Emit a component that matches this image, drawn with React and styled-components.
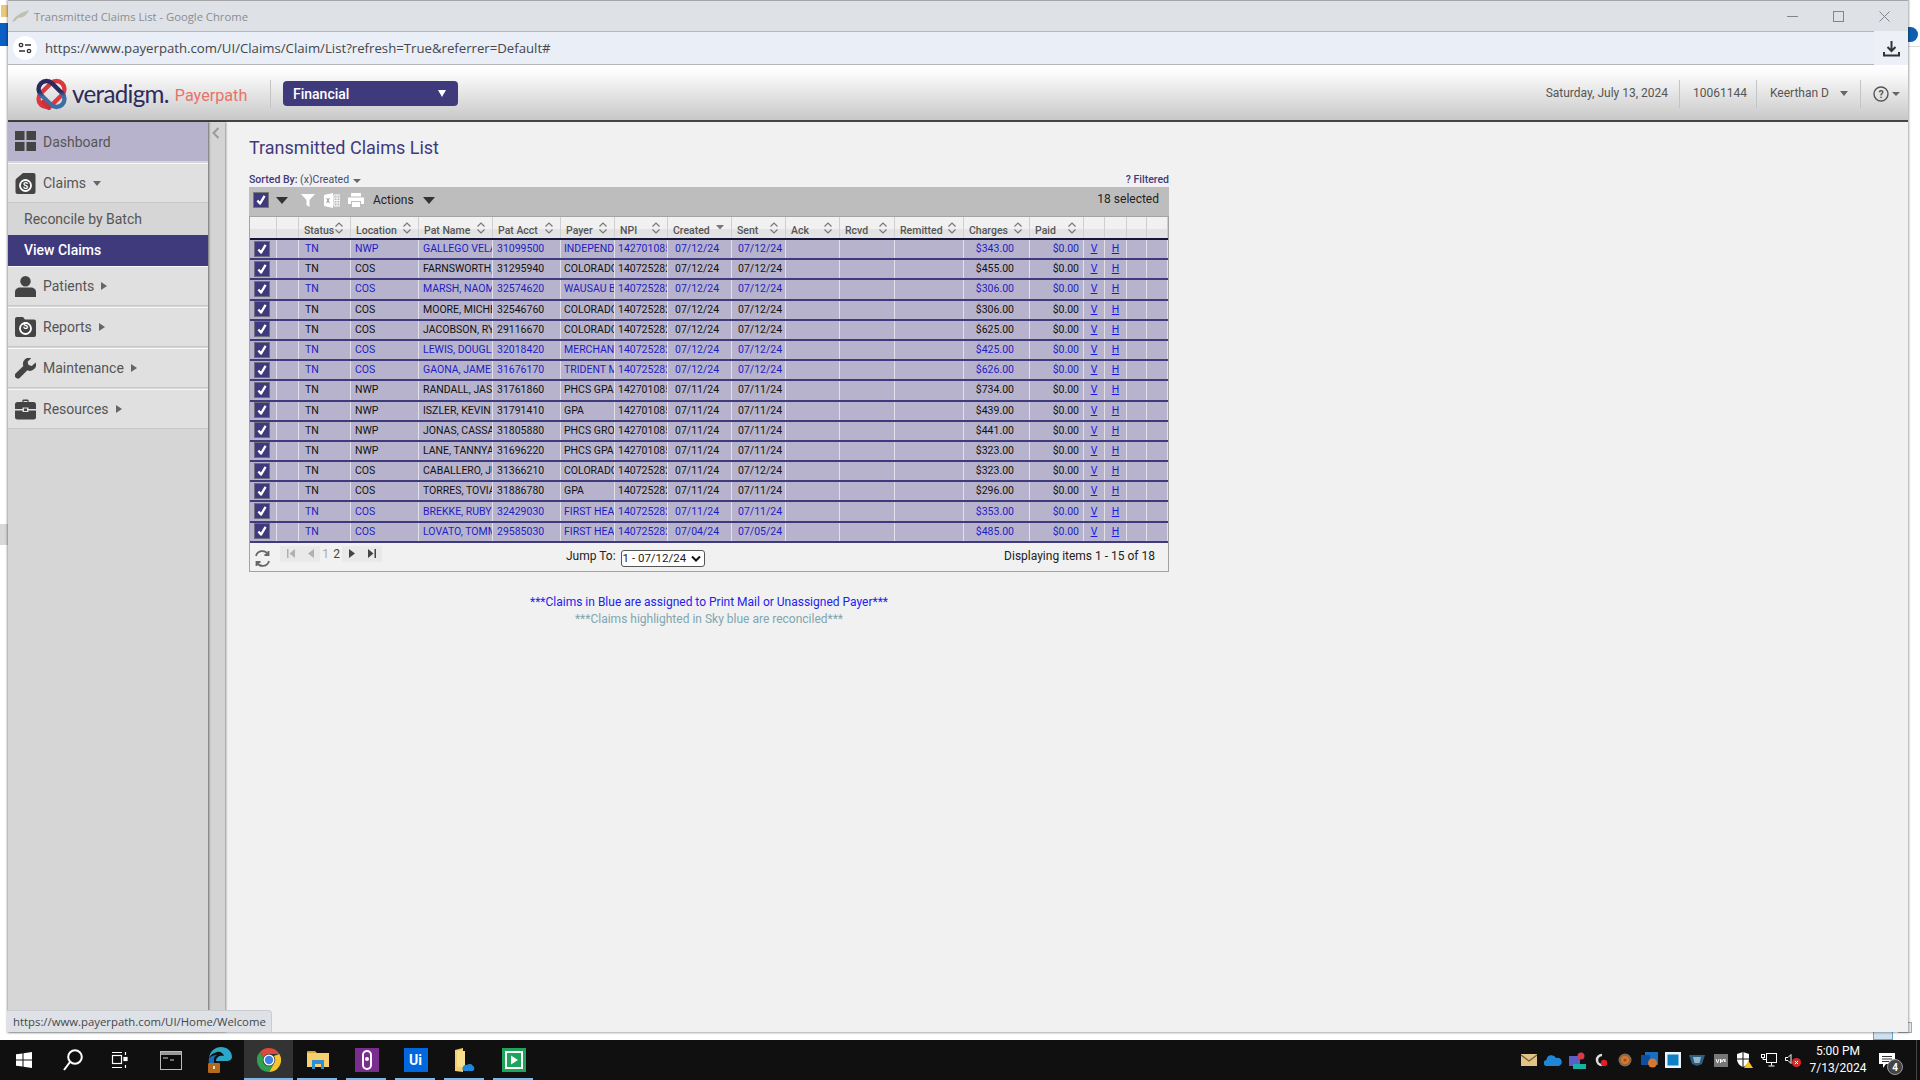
import React from 'react';
import styled, { createGlobalStyle } from 'styled-components';

const Global = createGlobalStyle`
  html, body { margin: 0; padding: 0; background: #fff; overflow: hidden; }
  * { box-sizing: border-box; }
  body { font-family: Roboto, "Liberation Sans", sans-serif; }
`;

const Desktop = styled.div`
  position: relative; width: 1920px; height: 1080px; display: flex; flex-direction: column; background: #fff; overflow: hidden;
`;
const DeskBit = styled.div`
  position: absolute; left: ${p => p.$x}px; top: ${p => p.$y}px; width: ${p => p.$w}px; height: ${p => p.$h}px;
  background: ${p => p.$bg}; border-radius: ${p => p.$r || 0}; border: ${p => p.$b || 'none'};
`;
const WindowArea = styled.div`
  position: relative; flex: 1; min-height: 0; padding: 0 12px 8px 8px; display: flex;
`;
const Win = styled.div`
  flex: 1; min-width: 0; display: flex; flex-direction: column; border-top: 1px solid #a4a6a9;
  box-shadow: 0 0 2px 1px rgba(0,0,0,.35); background: #f1f1f1; position: relative;
`;
const TitleBar = styled.div`
  height: 30px; flex: none; background: #dee1e6; display: flex; align-items: center; padding: 0 0 0 4px; gap: 4px;
  color: #8a8d91; font: 11.25px "Open Sans", sans-serif;
`;
const WinControls = styled.div`
  margin-left: auto; margin-right: 1px; display: flex; align-items: center; color: #80868b;
`;
const WinBtn = styled.div`
  width: 46px; height: 30px; display: flex; align-items: center; justify-content: center;
`;
const AddressBar = styled.div`
  height: 34px; flex: none; background: #e9eef7; border-top: 1px solid #b4b6b9; border-bottom: 1px solid #b4b6b9;
  display: flex; align-items: center; padding-left: 5px; color: #45474a; font: 13.2px "Open Sans", sans-serif;
`;
const SiteChip = styled.div`
  width: 24px; height: 24px; border-radius: 50%; background: #fff; display: flex; align-items: center; justify-content: center; margin-right: 8px;
`;
const DownloadSlot = styled.div`
  margin-left: auto; width: 34px; height: 34px; margin-top: -1px; margin-bottom: -1px; background: #edf0f6; display: flex; align-items: center; justify-content: center; color: #333;
`;
const AppHeader = styled.header`
  height: 57px; flex: none; background: linear-gradient(#fff, #fbfbfb 15%, #c8c8c8); border-bottom: 2px solid #444;
  display: flex; align-items: center; padding: 2px 8px 0 27px; color: #555; font-size: 12px;
`;
const LogoWrap = styled.div`display: flex; align-items: center; width: 235px; height: 53px;`;
const LogoWord = styled.span`
  font: 400 24.2px Lato, sans-serif; color: #2d2a5c; letter-spacing: -.7px; margin-left: 4px;
`;
const LogoSub = styled.span`
  font: 400 16.2px Roboto, sans-serif; color: #e8726a; margin-left: 6px; padding-top: 4px;
`;
const HeaderSep = styled.div`
  width: 1px; height: 28px; background: #c4c4c4; margin: ${p => p.$m || '0'};
`;
const ModuleBtn = styled.div`
  width: 175px; height: 25px; margin-left: 12px; background: #3f3a7c; border-radius: 4px; color: #fff; font-weight: 500; font-size: 14px;
  display: flex; align-items: center; justify-content: space-between; padding: 0 12px 0 10px;
`;
const HeaderRight = styled.div`
  margin-left: auto; display: flex; align-items: center;
`;
const HeaderText = styled.span`
  color: #555; font-size: 12px; white-space: nowrap; margin-top: -2px;
`;
const Main = styled.div`
  flex: 1; min-height: 0; display: flex;
`;
const Sidebar = styled.nav`
  width: 200px; flex: none; background: #d6d6d6; box-shadow: 1px 0 2px rgba(0,0,0,.5); z-index: 2;
`;
const NavItem = styled.div`
  display: flex; align-items: center; padding-left: 7px; gap: 7px; margin-bottom: ${p => p.$active ? 2 : 1}px;
  background: ${p => p.$active ? '#b8b3cc' : '#e0e0e0'}; color: #555; font-size: 14px; border-top: ${p => p.$active ? '0' : '1px solid #f7f7f7'};
  border-bottom: ${p => p.$active ? '0' : '1px solid #c8c8c8'};
  box-sizing: content-box; height: ${p => p.$active ? 39 : 38}px;
`;
const NavIcon = styled.span`
  width: 21px; height: 21px; display: flex; color: #444; flex: none;
`;
const SubItem = styled.div`
  height: 31px; display: flex; align-items: center; padding: 0 0 2px 16px; font-size: 14px;
  background: ${p => p.$sel ? '#3f3a7c' : '#d6d6d6'}; color: ${p => p.$sel ? '#fff' : '#555'}; font-weight: ${p => p.$sel ? 500 : 400};
`;
const Caret = styled.span`
  display: inline-block; width: 0; height: 0; margin-left: ${p => p.$ml ?? 6}px;
  ${p => p.$right
    ? `border-top: 4px solid transparent; border-bottom: 4px solid transparent; border-left: 6px solid ${p.$c || '#666'};`
    : `border-left: ${p.$s || 4.5}px solid transparent; border-right: ${p.$s || 4.5}px solid transparent; border-top: ${p.$t || 5}px solid ${p.$c || '#666'};`}
`;
const Strip = styled.div`
  width: 17px; flex: none; background: #d4d4d4; box-shadow: 1px 0 2px rgba(0,0,0,.4); padding: 2px 0 0 4px; color: #9a9a9a; z-index: 1;
`;
const Content = styled.main`
  flex: 1; min-width: 0; padding: 15px 0 0 24px; background: #f1f1f1;
`;
const Panel = styled.div`width: 920px;`;
const PageTitle = styled.h1`
  margin: 0; font-weight: 400; font-size: 18px; line-height: 22px; color: #3f3a7c;
`;
const SortRow = styled.div`
  height: 28px; padding-top: 12px; display: flex; justify-content: space-between; align-items: center; color: #3f3a7c; font-size: 10.5px;
`;
const SortLabel = styled.span`font-weight: 500;`;
const SortValue = styled.span`font-weight: 400; color: #444a70;`;
const Filtered = styled.span`font-weight: 500; margin-top: 1px;`;
const Toolbar = styled.div`
  height: 29px; background: #bdbdbd; display: flex; align-items: center; padding: 0 10px 3px 4px; color: #222; font-size: 12px;
`;
const ToolSpace = styled.span`display: inline-flex; margin-left: ${p => p.$ml}px;`;
const HeadCheck = styled.span`
  width: 16px; height: 16px; background: #3f3a7c; border: 1px solid #777; display: inline-flex; align-items: center; justify-content: center;
`;
const Selected = styled.span`margin-left: auto; margin-top: -2px;`;
const GridBox = styled.div`
  border: 1px solid #a3a3a3; background: #f1f1f1;
`;
const COLS = '27px 22px 52px 68px 74px 68px 54px 53px 64px 54px 54px 55px 69px 66px 54px 21px 22px 20px 21px';
const HeadRow = styled.div`
  display: grid; grid-template-columns: ${COLS}; height: 23px; border-bottom: 2px solid #16163a; background: linear-gradient(#f2f2f2, #f0f0f0 55%, #e2e2e2 60%, #e4e4e4);
`;
const HeadCell = styled.div`
  display: flex; align-items: center; justify-content: space-between; padding: 5px 6px 0 5px; border-right: 1px solid #cfcfcf; font-size: 10.5px; font-weight: 500; color: #555; white-space: nowrap; overflow: hidden;
`;
const SortIcon = styled.svg`margin-top: -5px; flex: none;`;
const Row = styled.div`
  display: grid; grid-template-columns: ${COLS}; height: 20.2px; background: #b8b3cc; border-bottom: 2px solid #3f3a7c;
  color: ${p => p.$blue ? '#1d1dc4' : '#111'}; font-size: 10.5px;
`;
const Cell = styled.div`
  display: flex; align-items: center; border-right: 1px solid #e2e0ea; overflow: hidden; white-space: nowrap; min-width: 0;
  padding: 0 ${p => p.$pr ?? 0}px 1px ${p => p.$pl ?? 3}px; justify-content: ${p => p.$j || 'flex-start'};
`;
const RowCheck = styled.span`
  width: 16px; height: 16px; background: #3f3a7c; border: 1px solid #6f6f80; display: flex; align-items: center; justify-content: center; flex: none;
`;
const LinkText = styled.span`color: #1a1ae6; text-decoration: underline;`;
const Footer = styled.div`
  height: 28px; display: flex; align-items: center; padding: 0 13px 0 4px; color: #222; font-size: 12px;
`;
const RefreshIcon = styled.svg`margin-top: 3px; flex: none;`;
const PagerGroup = styled.span`
  display: flex; align-items: center; height: 16px; margin-top: -6px; background: ${p => p.$bg || 'transparent'}; width: ${p => p.$w}px; justify-content: space-around; color: ${p => p.$c || '#444'}; margin-left: ${p => p.$ml || 0}px;
`;
const PageCurrent = styled.span`color: #444;`;
const JumpLabel = styled.span`margin-left: 184px; margin-top: -2px;`;
const SelectWrap = styled.span`
  position: relative; display: inline-flex; margin: 3px 0 0 5px;
`;
const JumpSelect = styled.select`
  appearance: none; width: 84px; height: 17px; padding: 0 0 0 1px; font: 11.5px Roboto, sans-serif; color: #222; background: #fff; border: 1px solid #555; border-radius: 3px;
`;
const SelectArrow = styled.svg`
  position: absolute; right: 4px; top: 5px; pointer-events: none;
`;
const Displaying = styled.span`margin-left: auto; margin-top: -2px;`;
const Notes = styled.div`
  padding-top: 22px; text-align: center; font-size: 12px; line-height: 17px;
`;
const Note = styled.div`color: ${p => p.$c};`;
const StatusBubble = styled.div`
  position: absolute; left: -1px; bottom: 0; width: 265px; height: 22px; background: #dee1e6; border: 1px solid #c9ccd1; border-left: 0; border-bottom: 0; border-top-right-radius: 4px;
  font: 11.35px "Open Sans", sans-serif; color: #45474a; display: flex; align-items: center; padding-left: 6px; z-index: 5;
`;
const Taskbar = styled.footer`
  height: 40px; flex: none; background: #101010; display: flex; align-items: stretch; color: #fff;
`;
const TaskStart = styled.div`display: flex; margin-left: -1px;`;
const TaskBtn = styled.div`
  position: relative; width: 49px; display: flex; align-items: center; justify-content: center; background: ${p => p.$active ? '#333' : 'transparent'};
  padding-right: ${p => p.$nudge || 0}px;
  &::after {
    content: ''; display: ${p => p.$run ? 'block' : 'none'}; position: absolute; bottom: 0; height: 2px; background: #76b9ed;
    left: ${p => p.$active ? 0 : 4}px; right: ${p => p.$active ? 0 : 5}px;
  }
`;
const Tray = styled.div`
  margin-left: auto; display: flex; align-items: center; padding-right: 4px;
`;
const TrayIcon = styled.div`
  width: 24px; display: flex; align-items: center; justify-content: center;
`;
const Clock = styled.div`
  width: 64px; margin-left: 1px; text-align: center; font-size: 12px; line-height: 17px; color: #fff;
`;
const Notify = styled.div`
  position: relative; width: 47px; height: 100%; display: flex; align-items: center; justify-content: center; padding-right: 12px; border-right: 1px solid #444; margin-right: -1px;
`;
const NotifyBadge = styled.span`
  position: absolute; left: 17px; top: 19px; width: 16px; height: 16px; border-radius: 50%; background: #444; border: 1px solid #999; font-size: 10px; font-weight: 700; display: flex; align-items: center; justify-content: center;
`;
const UiBox = styled.div`
  width: 24px; height: 24px; background: #0067df; color: #fff; font: 700 14px Roboto, sans-serif; display: flex; align-items: center; justify-content: center;
`;

const rows = [
  [1,'NWP','GALLEGO VELASCO','31099500','INDEPENDENT','1427010855','07/12/24','07/12/24','$343.00'],
  [0,'COS','FARNSWORTH, J','31295940','COLORADO','1407252823','07/12/24','07/12/24','$455.00'],
  [1,'COS','MARSH, NAOMI','32574620','WAUSAU BENEFITS','1407252823','07/12/24','07/12/24','$306.00'],
  [0,'COS','MOORE, MICHELLE','32546760','COLORADO','1407252823','07/12/24','07/12/24','$306.00'],
  [0,'COS','JACOBSON, RYAN','29116670','COLORADO','1407252823','07/12/24','07/12/24','$625.00'],
  [1,'COS','LEWIS, DOUGLAS','32018420','MERCHANTS','1407252823','07/12/24','07/12/24','$425.00'],
  [1,'COS','GAONA, JAMES','31676170','TRIDENT MEDICAL','1407252823','07/12/24','07/12/24','$626.00'],
  [0,'NWP','RANDALL, JASON','31761860','PHCS GPA','1427010855','07/11/24','07/11/24','$734.00'],
  [0,'NWP','ISZLER, KEVIN','31791410','GPA','1427010855','07/11/24','07/11/24','$439.00'],
  [0,'NWP','JONAS, CASSANDRA','31805880','PHCS GROUP','1427010855','07/11/24','07/11/24','$441.00'],
  [0,'NWP','LANE, TANNYA','31696220','PHCS GPA','1427010855','07/11/24','07/11/24','$323.00'],
  [0,'COS','CABALLERO, JUAN','31366210','COLORADO','1407252823','07/11/24','07/12/24','$323.00'],
  [0,'COS','TORRES, TOVIAH','31886780','GPA','1407252823','07/11/24','07/11/24','$296.00'],
  [1,'COS','BREKKE, RUBY','32429030','FIRST HEALTH','1407252823','07/11/24','07/11/24','$353.00'],
  [1,'COS','LOVATO, TOMMY','29585030','FIRST HEALTH','1407252823','07/04/24','07/05/24','$485.00'],
];
const heads = ['', '', 'Status', 'Location', 'Pat Name', 'Pat Acct', 'Payer', 'NPI', 'Created', 'Sent', 'Ack', 'Rcvd', 'Remitted', 'Charges', 'Paid', '', '', '', ''];

const Check = ({ s = 12 }) => (
  <svg width={s} height={s} viewBox="0 0 12 12"><path d="M2.4 6.5 5 9.6 9.6 1.8" fill="none" stroke="#fff" strokeWidth="2.3" strokeLinejoin="round" /></svg>
);
const Sort = () => (
  <SortIcon width="10" height="12" viewBox="0 0 10 12"><path d="M1.5 4.5 5 1l3.5 3.5M1.5 7.5 5 11l3.5-3.5" fill="none" stroke="#777" strokeWidth="1.2" /></SortIcon>
);
const SortDown = () => (
  <SortIcon width="10" height="12" viewBox="0 0 10 12"><path d="M1 3h8L5 7.5z" fill="#777" /></SortIcon>
);
const Money = ({ x = 10.5, y = 12.5 }) => (
  <g>
    <circle cx={x} cy={y} r="6.4" fill="#fff" />
    <circle cx={x} cy={y} r="4.6" fill="#444" />
    <text x={x} y={y + 3} textAnchor="middle" fontSize="8.4" fontWeight="700" fill="#fff" fontFamily="Roboto">S</text>
  </g>
);
const IDash = () => (<svg viewBox="0 0 21 21" width="21" height="21" fill="#444"><rect width="9.5" height="9" /><rect x="11.5" width="9.5" height="9" /><rect y="11" width="9.5" height="9" /><rect x="11.5" y="11" width="9.5" height="9" /></svg>);
const IClaims = () => (<svg viewBox="0 0 21 21" width="21" height="21"><path d="M1.5 5.5 8 0h10.5a2 2 0 0 1 2 2v17a2 2 0 0 1-2 2h-16a2 2 0 0 1-2-2V7z" fill="#444" /><Money /></svg>);
const IPerson = () => (<svg viewBox="0 0 21 21" width="21" height="21" fill="#444"><circle cx="10.5" cy="5.2" r="5.2" /><path d="M0 21v-5c0-3 2.5-4.5 5-4.5h11c2.500 0 5 1.500 5 4.500v5z" /></svg>);
const IReports = () => (<svg viewBox="0 0 21 21" width="21" height="21"><path d="M0 2a2 2 0 0 1 2-2h6l2 2.500h9a2 2 0 0 1 2 2V18a2 2 0 0 1-2 2H2a2 2 0 0 1-2-2z" fill="#444" /><Money y="11.5" /></svg>);
const IWrench = () => (<svg viewBox="0 0 21 21" width="21" height="21"><path d="M20.500 4.400 16.800 8l-3.300-.9-.9-3.300L16.200.3a6 6 0 0 0-7.900 7.600L.8 15.300a2.900 2.900 0 0 0 4.100 4.400l7.500-7.500a6 6 0 0 0 8.100-7.800z" fill="#444" /></svg>);
const IBrief = () => (<svg viewBox="0 0 21 21" width="21" height="21" fill="#444"><path d="M7 2.800C7.300 1 8 .5 9 .5h3c1 0 1.700.5 2 2.300h-1.400c-.2-.7-.4-.9-.8-.9H9.200c-.4 0-.6.200-.8.900z" /><path d="M2.500 3h16A2.500 2.500 0 0 1 21 5.500V10h-7.500V8.500h-6V10H0V5.500A2.500 2.500 0 0 1 2.500 3z" /><path d="M0 11.500h7.500V13h6v-1.500H21V18a2.500 2.500 0 0 1-2.500 2.500h-16A2.500 2.500 0 0 1 0 18z" /><rect x="9" y="9.500" width="3" height="2.500" /></svg>);

const LogoMark = () => (
  <svg width="33" height="32" viewBox="0 0 33 32">
    <defs>
      <linearGradient id="vg" gradientUnits="userSpaceOnUse" x1="6" y1="6" x2="27" y2="26">
        <stop offset="0.42" stopColor="#2b2a5e" /><stop offset="0.58" stopColor="#3c6ea5" />
      </linearGradient>
    </defs>
    <g fill="none" strokeWidth="4.4">
      <rect x="1.500" y="8" width="30" height="16" rx="8" stroke="#d93a3f" transform="rotate(-45 16.500 16)" />
      <rect x="1.500" y="8" width="30" height="16" rx="8" stroke="url(#vg)" transform="rotate(45 16.500 16)" />
    </g>
    <path d="M8 24 L14 30" stroke="#c8323a" strokeWidth="4.400" strokeLinecap="round" />
  </svg>
);

const Chrome = () => (
  <svg width="24" height="24" viewBox="0 0 24 24">
    <path d="M12 0a12 12 0 0 1 10.400 6H12a6 6 0 0 0-5.700 4L3 4a12 12 0 0 1 9-4z" fill="#dd4a3c" />
    <path d="M22.400 6A12 12 0 0 1 12 24l5.200-9a6 6 0 0 0-.4-7z" fill="#f7c431" />
    <path d="M3 4a12 12 0 0 0 9 20l5.200-9a6 6 0 0 1-10.900-5z" fill="#2fa14f" />
    <circle cx="12" cy="12" r="5.500" fill="#fff" /><circle cx="12" cy="12" r="4.200" fill="#3e82e8" />
  </svg>
);

const tray = [
  <svg key="a" width="16" height="12" viewBox="0 0 16 12"><rect width="16" height="12" fill="#e3c385" /><path d="M0 1l8 6 8-6" fill="none" stroke="#6a5a3a" strokeWidth="1.200" /></svg>,
  <svg key="b" width="18" height="11" viewBox="0 0 18 11"><path d="M3 11a3 3 0 0 1-.5-6 5 5 0 0 1 9.500-2 4 4 0 0 1 3 8z" fill="#1f86d8" /></svg>,
  <svg key="c" width="17" height="17" viewBox="0 0 17 17"><rect y="4" width="11" height="10" fill="#5a5fc7" /><circle cx="12" cy="4" r="3.500" fill="#d83b4a" /><rect x="4" y="12" width="13" height="5" fill="#18b0a0" /></svg>,
  <svg key="d" width="16" height="16" viewBox="0 0 16 16"><path d="M9 3a5 5 0 1 0 0 10" fill="none" stroke="#ddd" strokeWidth="2.500" /><circle cx="11" cy="11" r="3.200" fill="#e81c24" /></svg>,
  <svg key="e" width="14" height="14" viewBox="0 0 14 14"><circle cx="7" cy="7" r="6.500" fill="#8a6a4a" /><circle cx="7" cy="7" r="4" fill="#d9772c" /><circle cx="7" cy="7" r="1.500" fill="#a34a1a" /></svg>,
  <svg key="f" width="17" height="16" viewBox="0 0 17 16"><rect x="4" width="13" height="13" fill="#1b6ec2" /><rect y="3" width="9" height="10" fill="#0b4f9e" /><circle cx="11.500" cy="11" r="4.500" fill="#d9772c" /></svg>,
  <svg key="g" width="16" height="16" viewBox="0 0 16 16"><rect width="16" height="16" fill="#e8f4fb" /><rect x="2.500" y="2.500" width="11" height="11" fill="#0f7fc4" /></svg>,
  <svg key="h" width="16" height="12" viewBox="0 0 16 12"><path d="M0 1h16l-3 9-5 2-5-2z" fill="#295f80" /><path d="M4 3h8l-1.500 6H5.500z" fill="#9ab4c4" /></svg>,
  <svg key="i" width="14" height="13" viewBox="0 0 14 13"><rect width="14" height="13" fill="#777" /><path d="M2 5l1.500 4L5 5M6.500 9V5l1.500 3 1.500-3 1.500 3V5" fill="none" stroke="#fff" strokeWidth="1" /></svg>,
  <svg key="j" width="16" height="16" viewBox="0 0 16 16"><path d="M6 0l6 2v5c0 4-3 7-6 8-3-1-6-4-6-8V2z" fill="#fff" /><path d="M6 0v15M0 7h12" stroke="#101010" /><path d="M11.500 9l4.500 7H7z" fill="#f4c21c" /></svg>,
  <svg key="k" width="16" height="14" viewBox="0 0 16 14" fill="none" stroke="#fff"><rect x="5.500" y=".5" width="10" height="9" /><rect x=".5" y="1.500" width="3" height="3" /><path d="M2 4.500v2h3.500M10.500 9.500v3M7.500 13h6" /></svg>,
  <svg key="l" width="16" height="14" viewBox="0 0 16 14"><path d="M.5 4.500h2.500l3-3v9l-3-3H.5z" fill="none" stroke="#fff" /><circle cx="11.500" cy="9.500" r="4.500" fill="#d92b2b" /><path d="M10 8l3 3M13 8l-3 3" stroke="#fff" /></svg>,
];

export default function App() {
  return (
    <Desktop>
      <Global />
      <DeskBit $x={1} $y={5} $w={8} $h={12} $bg="#e9c97c" />
      <DeskBit $x={0} $y={23} $w={8} $h={23} $bg="#0a5fc4" />
      <DeskBit $x={0} $y={524} $w={8} $h={21} $bg="#d8d8d8" />
      <DeskBit $x={1906} $y={27} $w={12} $h={15} $r="0 8px 8px 0" $bg="#0f5fae" />
      <DeskBit $x={1908} $y={46} $w={12} $h={1} $bg="#ddd" />
      <DeskBit $x={1873} $y={1031} $w={20} $h={9} $bg="#cfe0ee" $b="1px solid #6aa5cc" />
      <DeskBit $x={1898} $y={1022} $w={14} $h={11} $bg="#e8edf3" $b="1px solid #a0a8b0" />
      <WindowArea>
        <Win>
          <TitleBar>
            <svg width="18" height="14" viewBox="0 0 18 14"><path d="M0 13C3 7 8 4 17 1c-2 5-6 8-11 8l-3 3z" fill="#c2beb0" /></svg>
            <span>Transmitted Claims List - Google Chrome</span>
            <WinControls>
              <WinBtn><svg width="11" height="11" viewBox="0 0 11 11"><path d="M0 5.500h11" stroke="currentColor" /></svg></WinBtn>
              <WinBtn><svg width="11" height="11" viewBox="0 0 11 11"><rect x=".5" y=".5" width="10" height="10" fill="none" stroke="currentColor" /></svg></WinBtn>
              <WinBtn><svg width="11" height="11" viewBox="0 0 11 11"><path d="M.5.500l10 10M10.500.5l-10 10" stroke="currentColor" /></svg></WinBtn>
            </WinControls>
          </TitleBar>
          <AddressBar>
            <SiteChip>
              <svg width="14" height="12" viewBox="0 0 14 12" fill="none" stroke="#333" strokeWidth="1.300"><circle cx="3" cy="3" r="1.700" /><path d="M7 3h6M1 9h6" /><circle cx="11" cy="9" r="1.700" /></svg>
            </SiteChip>
            <span>https://www.payerpath.com/UI/Claims/Claim/List?refresh=True&amp;referrer=Default#</span>
            <DownloadSlot>
              <svg width="17" height="17" viewBox="0 0 17 17" fill="none" stroke="#333" strokeWidth="2"><path d="M8.500 1v9M4.500 7l4 4 4-4M1 12v3.500h15V12" /></svg>
            </DownloadSlot>
          </AddressBar>
          <AppHeader>
            <LogoWrap>
              <LogoMark />
              <LogoWord>veradigm.</LogoWord>
              <LogoSub>Payerpath</LogoSub>
            </LogoWrap>
            <HeaderSep />
            <ModuleBtn>Financial<Caret $c="#fff" $s={4} $t={7} $ml={0} /></ModuleBtn>
            <HeaderRight>
              <HeaderText>Saturday, July 13, 2024</HeaderText>
              <HeaderSep $m="0 13px 0 11px" />
              <HeaderText>10061144</HeaderText>
              <HeaderSep $m="0 13px 0 9px" />
              <HeaderText>Keerthan D</HeaderText>
              <Caret $ml={11} />
              <HeaderSep $m="0 12px 0 12px" />
              <svg width="16" height="16" viewBox="0 0 16 16"><circle cx="8" cy="8" r="7" fill="none" stroke="#555" strokeWidth="1.400" /><text x="8" y="11.700" textAnchor="middle" fontSize="10.500" fontWeight="700" fill="#555" fontFamily="Roboto">?</text></svg>
              <Caret $ml={3} $s={4} $t={4} />
            </HeaderRight>
          </AppHeader>
          <Main>
            <Sidebar>
              <NavItem $active><NavIcon><IDash /></NavIcon>Dashboard</NavItem>
              <NavItem><NavIcon><IClaims /></NavIcon>Claims<Caret $ml={0} /></NavItem>
              <SubItem>Reconcile by Batch</SubItem>
              <SubItem $sel>View Claims</SubItem>
              <NavItem><NavIcon><IPerson /></NavIcon>Patients<Caret $right $ml={0} /></NavItem>
              <NavItem><NavIcon><IReports /></NavIcon>Reports<Caret $right $ml={0} /></NavItem>
              <NavItem><NavIcon><IWrench /></NavIcon>Maintenance<Caret $right $ml={0} /></NavItem>
              <NavItem><NavIcon><IBrief /></NavIcon>Resources<Caret $right $ml={0} /></NavItem>
            </Sidebar>
            <Strip>
              <svg width="8" height="12" viewBox="0 0 8 12"><path d="M6.500 1 1.500 6l5 5" fill="none" stroke="#9a9a9a" strokeWidth="2" /></svg>
            </Strip>
            <Content>
              <Panel>
                <PageTitle>Transmitted Claims List</PageTitle>
                <SortRow>
                  <span><SortLabel>Sorted By: </SortLabel><SortValue>(x)Created</SortValue><Caret $ml={4} $s={4} $t={4} /></span>
                  <Filtered>? Filtered</Filtered>
                </SortRow>
                <Toolbar>
                  <HeadCheck><Check /></HeadCheck>
                  <ToolSpace $ml={7}><Caret $ml={0} $s={6} $t={7} $c="#333" /></ToolSpace>
                  <ToolSpace $ml={13}>
                    <svg width="14" height="13" viewBox="0 0 14 13"><path d="M0 0h14L8.500 6v7l-3-2V6z" fill="#fff" /></svg>
                  </ToolSpace>
                  <ToolSpace $ml={9}>
                    <svg width="16" height="15" viewBox="0 0 16 15"><path d="M0 2l9-2v15l-9-2z" fill="#fff" /><path d="M2.500 5l3 5M5.500 5l-3 5" stroke="#999" /><path d="M10 2h6v11h-6z" fill="none" stroke="#fff" /><path d="M10 5h6M10 7.500h6M10 10h6M13 2v11" stroke="#fff" strokeWidth=".8" /></svg>
                  </ToolSpace>
                  <ToolSpace $ml={8}>
                    <svg width="16" height="14" viewBox="0 0 16 14" fill="#fff"><rect x="3" width="10" height="3.500" /><path d="M0 4.500h16V11h-3V8H3v3H0z" /><rect x="4" y="9" width="8" height="5" /></svg>
                  </ToolSpace>
                  <ToolSpace $ml={9}>Actions</ToolSpace>
                  <ToolSpace $ml={9}><Caret $ml={0} $s={6} $t={7} $c="#333" /></ToolSpace>
                  <Selected>18 selected</Selected>
                </Toolbar>
                <GridBox>
                  <HeadRow>
                    {heads.map((h, i) => (
                      <HeadCell key={i}>
                        {h && <span>{h}</span>}
                        {h === 'Created' ? <SortDown /> : h ? <Sort /> : null}
                      </HeadCell>
                    ))}
                  </HeadRow>
                  {rows.map((r, i) => (
                    <Row key={i} $blue={!!r[0]}>
                      <Cell $pl={4}><RowCheck><Check /></RowCheck></Cell>
                      <Cell />
                      <Cell $pl={6}>TN</Cell>
                      <Cell $pl={4}>{r[1]}</Cell>
                      <Cell $pl={4}>{r[2]}</Cell>
                      <Cell $pl={4}>{r[3]}</Cell>
                      <Cell $pl={3}>{r[4]}</Cell>
                      <Cell $pl={3}>{r[5]}</Cell>
                      <Cell $pl={7}>{r[6]}</Cell>
                      <Cell $pl={6}>{r[7]}</Cell>
                      <Cell /><Cell /><Cell />
                      <Cell $j="flex-end" $pr={15}>{r[8]}</Cell>
                      <Cell $j="flex-end" $pr={4}>$0.00</Cell>
                      <Cell $j="center" $pl={0}><LinkText>V</LinkText></Cell>
                      <Cell $j="center" $pl={0}><LinkText>H</LinkText></Cell>
                      <Cell /><Cell />
                    </Row>
                  ))}
                  <Footer>
                    <RefreshIcon width="17" height="17" viewBox="0 0 17 17" fill="none" stroke="#666" strokeWidth="1.800"><path d="M2 6a6.500 6.500 0 0 1 12-1.500M14.500 1v4h-4M15 11a6.500 6.500 0 0 1-12 1.500M2.500 16v-4h4" /></RefreshIcon>
                    <PagerGroup $bg="#e9e9e9" $w={40} $c="#b0b0b0" $ml={9}>
                      <svg width="8" height="9" viewBox="0 0 8 9" fill="currentColor"><path d="M0 0h1.500v9H0zM8 0v9L2.500 4.500z" /></svg>
                      <svg width="6" height="9" viewBox="0 0 6 9" fill="currentColor"><path d="M6 0v9L0 4.500z" /></svg>
                    </PagerGroup>
                    <PagerGroup $w={22} $c="#aaa">1<PageCurrent>2</PageCurrent></PagerGroup>
                    <PagerGroup $bg="#e9e9e9" $w={40} $c="#444">
                      <svg width="6" height="9" viewBox="0 0 6 9" fill="currentColor"><path d="M0 0v9l6-4.500z" /></svg>
                      <svg width="8" height="9" viewBox="0 0 8 9" fill="currentColor"><path d="M6.500 0H8v9H6.500zM0 0v9l5.500-4.500z" /></svg>
                    </PagerGroup>
                    <JumpLabel>Jump To:</JumpLabel>
                    <SelectWrap>
                      <JumpSelect defaultValue="1"><option value="1">1 - 07/12/24</option></JumpSelect>
                      <SelectArrow width="10" height="7" viewBox="0 0 10 7"><path d="M1 1.500 5 5.500l4-4" fill="none" stroke="#111" strokeWidth="2" /></SelectArrow>
                    </SelectWrap>
                    <Displaying>Displaying items 1 - 15 of 18</Displaying>
                  </Footer>
                </GridBox>
                <Notes>
                  <Note $c="#2222ee">***Claims in Blue are assigned to Print Mail or Unassigned Payer***</Note>
                  <Note $c="#7fa6b0">***Claims highlighted in Sky blue are reconciled***</Note>
                </Notes>
              </Panel>
            </Content>
          </Main>
          <StatusBubble>https://www.payerpath.com/UI/Home/Welcome</StatusBubble>
        </Win>
      </WindowArea>
      <Taskbar>
        <TaskStart>
          <TaskBtn>
            <svg width="16" height="16" viewBox="0 0 16 16" fill="#fff"><path d="M0 2.300 6.500 1.400V7.500H0zM7.500 1.200 16 0v7.500H7.500zM0 8.500h6.500v6.100L0 13.700zM7.500 8.500H16V16l-8.500-1.200z" /></svg>
          </TaskBtn>
          <TaskBtn>
            <svg width="20" height="22" viewBox="0 0 20 22" fill="none" stroke="#fff" strokeWidth="2"><circle cx="12" cy="8" r="6.800" /><path d="M7 13 1 21" /></svg>
          </TaskBtn>
          <TaskBtn $nudge={4}>
            <svg width="18" height="18" viewBox="0 0 18 18" fill="none" stroke="#fff" strokeWidth="1.200"><rect x="1.500" y="4.500" width="9" height="8" /><path d="M1 1.500h10M1 16.500h10M14.500 1v3M14.500 14v3" /><rect x="13" y="6.500" width="3" height="3" fill="#fff" /></svg>
          </TaskBtn>
          <TaskBtn>
            <svg width="22" height="19" viewBox="0 0 22 19"><rect x=".5" y=".5" width="21" height="18" fill="#0c0c0c" stroke="#bbb" /><rect x="1" y="1" width="20" height="3" fill="#999" /><path d="M3 7h5M10 9h4" stroke="#ccc" /></svg>
          </TaskBtn>
          <TaskBtn>
            <svg width="24" height="26" viewBox="0 0 24 26"><path d="M1 11C2 4 7 0 13 0c6 0 11 4 11 10 0 2-2 4-5 4H8c0-4 4-6 8-5-1-3-4-5-7-4-4 1-7 3-8 6z" fill="#2aa7c9" /><path d="M1 11c-1 5 1 9 5 11V12c0-1 1-3 3-4-3 0-6 1-8 3z" fill="#1a6ab8" /><rect x="0" y="16" width="12" height="10" rx="1" fill="#b46a1e" /><rect x="5" y="19" width="2" height="3" fill="#f3d9a8" /></svg>
          </TaskBtn>
          <TaskBtn $active $run><Chrome /></TaskBtn>
          <TaskBtn $run>
            <svg width="22" height="20" viewBox="0 0 22 20"><path d="M0 2a1 1 0 0 1 1-1h7l2 2h-10z" fill="#d8a93a" /><rect y="3" width="22" height="14" fill="#f7cf6c" /><path d="M5 10h12v9h-3v-5H8v5H5z" fill="#2e8ed8" /></svg>
          </TaskBtn>
          <TaskBtn $run>
            <svg width="24" height="24" viewBox="0 0 24 24"><rect width="24" height="24" fill="#7a2d8f" /><path d="M12 3a4 4 0 0 1 4 4v10a4 4 0 0 1-8 0V7a4 4 0 0 1 4-4z" fill="none" stroke="#fff" strokeWidth="2" /><circle cx="12" cy="11" r="2" fill="#fff" /></svg>
          </TaskBtn>
          <TaskBtn $run><UiBox>Ui</UiBox></TaskBtn>
          <TaskBtn $run>
            <svg width="20" height="24" viewBox="0 0 20 24"><path d="M0 2 8 0v24l-8-1z" fill="#f4cf72" /><path d="M2 3h8v16H2z" fill="#f8e08e" /><path d="M8 19a3 3 0 0 1 4-2 4 4 0 0 1 6 1 3 3 0 0 1 0 5H9a2.500 2.500 0 0 1-1-4z" fill="#1f86d8" /></svg>
          </TaskBtn>
          <TaskBtn $run>
            <svg width="24" height="24" viewBox="0 0 24 24"><rect width="24" height="24" fill="#1fa45c" /><rect x="3" y="3" width="18" height="18" fill="#fff" /><rect x="5" y="5" width="14" height="14" fill="#1fa45c" /><path d="M9 7.500v9l7-4.500z" fill="#fff" /></svg>
          </TaskBtn>
        </TaskStart>
        <Tray>
          {tray.map((t, i) => <TrayIcon key={i}>{t}</TrayIcon>)}
          <Clock>5:00 PM<br />7/13/2024</Clock>
          <Notify>
            <svg width="16" height="15" viewBox="0 0 16 15"><path d="M0 0h16v11H7l-3 4v-4H0z" fill="#fff" /><path d="M3 3.500h10M3 6h10M3 8.500h7" stroke="#333" /></svg>
            <NotifyBadge>4</NotifyBadge>
          </Notify>
        </Tray>
      </Taskbar>
    </Desktop>
  );
}
